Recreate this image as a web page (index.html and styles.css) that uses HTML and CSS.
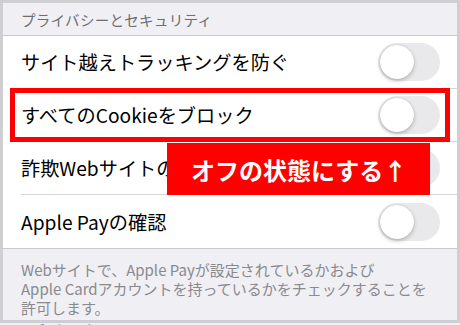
FILE: index.html
```html
<!DOCTYPE html>
<html lang="ja">
<head>
  <meta charset="utf-8">
  <title>プライバシーとセキュリティ</title>
  <link rel="stylesheet" href="styles.css">
</head>
<body>
<div class="frame">
  <div class="group-title">プライバシーとセキュリティ</div>
  <ul class="list">
    <li class="row"><span class="label">サイト越えトラッキングを防ぐ</span><span class="switch"></span></li>
    <li class="row"><span class="label">すべてのCookieをブロック</span><span class="switch"></span><div class="mark"></div></li>
    <li class="row"><span class="label">詐欺Webサイトの警告</span><span class="switch"></span><div class="callout">オフの状態にする↑</div></li>
    <li class="row"><span class="label">Apple Payの確認</span><span class="switch"></span></li>
  </ul>
  <p class="note">Webサイトで、Apple Payが設定されているかおよび<br>Apple Cardアカウントを持っているかをチェックすることを<br>許可します。</p>
</div>
<p class="link">SafariとプライバシーについてI...</p>
</body>
</html>
```

FILE: styles.css
```css
* {
  box-sizing: border-box;
  }
html, body {
  margin: 0;
  padding: 0;
  }
body {
  width: 460px;
  height: 325px;
  overflow: hidden;
  font-family: "Noto Sans CJK JP", "Noto Sans", sans-serif;
  background-color: #efeff4;
  }
.frame {
  height: 323px;
  border: 3px solid #cfcfd1;
  background-color: #efeff4;
  overflow: hidden;
  }
.group-title {
  height: 32px;
  padding: 0 18px;
  display: flex;
  align-items: center;
  font-size: 14.5px;
  letter-spacing: 0.3px;
  color: #6d6d72;
  }
.list {
  margin: 0;
  padding: 0;
  list-style: none;
  background-color: #fff;
  border-top: 1px solid #c8c7cc;
  border-bottom: 1px solid #c8c7cc;
  }
.row {
  position: relative;
  height: 53px;
  margin-left: 18px;
  padding-right: 17px;
  display: flex;
  align-items: center;
  justify-content: space-between;
  border-bottom: 1px solid #d6d6da;
  }
.row:last-child {
  border-bottom: none;
  }
.label {
  font-size: 19.2px;
  color: #000;
  }
.switch {
  position: relative;
  width: 62px;
  height: 38px;
  border-radius: 19px;
  background-color: #e9e9eb;
  }
.switch::after {
  content: "";
  position: absolute;
  left: 2px;
  top: 2px;
  width: 34px;
  height: 34px;
  border-radius: 50%;
  background-color: #fff;
  box-shadow: 0 2px 4px rgba(0,0,0,0.22), 0 0 1px rgba(0,0,0,0.25);
  }
.mark {
  position: absolute;
  left: -11px;
  top: -1px;
  width: 440px;
  height: 54px;
  border: 5px solid #ff0000;
  }
.callout {
  position: absolute;
  left: 146px;
  top: 1px;
  width: 263px;
  height: 52px;
  padding-left: 24px;
  display: flex;
  align-items: center;
  background-color: #ff0000;
  color: #fff;
  font-size: 24px;
  font-weight: bold;
  white-space: nowrap;
  }
.note {
  margin: 11px 18px 0;
  font-size: 15px;
  line-height: 19px;
  color: #8a8a8e;
  }
.link {
  margin: 2px 0 0;
  padding-left: 21px;
  font-size: 15px;
  line-height: 12px;
  color: #5a9af2;
  white-space: nowrap;
  }
```
